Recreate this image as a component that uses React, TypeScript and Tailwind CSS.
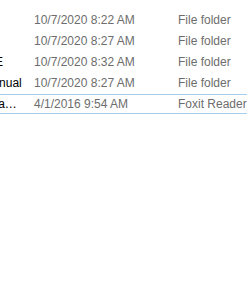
import React from "react";

const rows = [
  { name: "Drivers", date: "10/7/2020 8:22 AM", type: "File folder" },
  { name: "Firmware", date: "10/7/2020 8:27 AM", type: "File folder" },
  { name: "Setup-Tools_EXE", date: "10/7/2020 8:32 AM", type: "File folder" },
  { name: "Product User Manual", date: "10/7/2020 8:27 AM", type: "File folder" },
  { name: "Installation Toyota.pdf", date: "4/1/2016 9:54 AM", type: "Foxit Reader", sel: true },
];

export default function App() {
  return (
    <div className="w-[247px] h-[290px] bg-white overflow-hidden font-['Segoe_UI','Liberation_Sans',sans-serif] text-[12px] leading-none">
      <div className="pt-[10px] flex flex-col gap-[1px] ml-[-120px]">
        {rows.map((r, i) => (
          <div
            key={i}
            className={
              "flex h-[20px] w-[420px] shrink-0 items-center border " +
              (r.sel ? "border-[#a6cdec]" : "border-transparent")
            }
          >
            <div
              className={
                "w-[148px] shrink-0 pl-[28px] truncate text-black " +
                (r.sel ? "pr-[9px]" : "pr-[2px]")
              }
            >
              {r.name}
            </div>
            <div className="w-[149px] shrink-0 pl-[5px] text-[#6d6d6d] whitespace-nowrap">{r.date}</div>
            <div className="w-[100px] shrink-0 text-[#6d6d6d] whitespace-nowrap">{r.type}</div>
          </div>
        ))}
      </div>
    </div>
  );
}
